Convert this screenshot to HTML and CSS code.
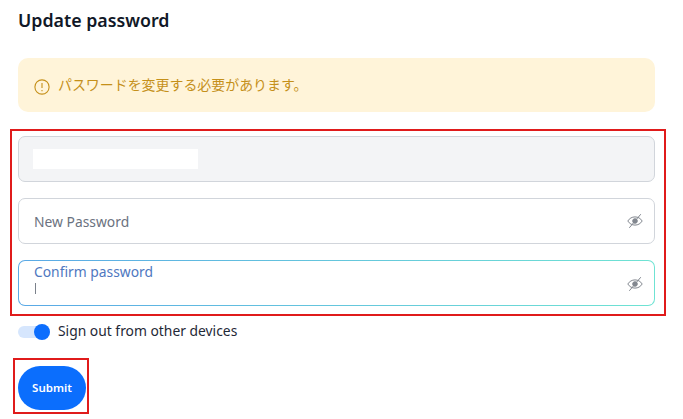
FILE: index.html
```html
<!DOCTYPE html>
<html lang="ja">
<head>
<meta charset="utf-8">
<title>Update password</title>
<link rel="stylesheet" href="styles.css">
</head>
<body>
<main class="page">
  <h1 class="title">Update password</h1>
  <div class="alert">
    <svg class="alert-icon" viewBox="0 0 16 16" width="16" height="16" fill="none" stroke="#c5901a" stroke-width="1.100">
      <circle cx="8" cy="8" r="7.100"/>
      <path d="M8 4v5M8 11v1.200"/>
    </svg>
    <span class="alert-text">パスワードを変更する必要があります。</span>
  </div>
  <form class="form">
    <div class="field field-disabled"><span class="redacted"></span></div>
    <div class="field">
      <span class="placeholder">New Password</span>
      <svg class="eye" viewBox="0 0 16 16" width="16" height="16" fill="none" stroke="#82878f" stroke-width="1">
        <path d="M.8 8C2.500 5.300 5 3.900 8 3.900s5.500 1.400 7.200 4.100c-1.700 2.700-4.200 4.100-7.200 4.100S2.500 10.700.8 8z"/>
        <circle cx="8" cy="8" r="2.300" fill="#82878f"/>
        <path d="M2.300 14.800 13.800 1.200"/>
      </svg>
    </div>
    <div class="field-focus">
      <div class="field-inner">
        <div class="focus-text">
          <span class="label">Confirm password</span>
          <span class="caret"></span>
        </div>
        <svg class="eye" viewBox="0 0 16 16" width="16" height="16" fill="none" stroke="#82878f" stroke-width="1">
          <path d="M.8 8C2.500 5.300 5 3.900 8 3.900s5.500 1.400 7.200 4.100c-1.700 2.700-4.200 4.100-7.200 4.100S2.500 10.700.8 8z"/>
          <circle cx="8" cy="8" r="2.300" fill="#82878f"/>
          <path d="M2.300 14.800 13.800 1.200"/>
        </svg>
      </div>
    </div>
    <div class="toggle-row">
      <span class="toggle"><span class="knob"></span></span>
      <span class="toggle-label">Sign out from other devices</span>
    </div>
    <button class="submit" type="button">Submit</button>
  </form>
  <div class="mark mark-fields"></div>
  <div class="mark mark-submit"></div>
</main>
</body>
</html>
```
FILE: styles.css
```css
* { box-sizing: border-box; }
html, body { margin: 0; padding: 0; background: #fff; }
body { font-family: "Noto Sans", "Noto Sans CJK JP", sans-serif; overflow: hidden; }
.page { position: relative; width: 683px; height: 419px; padding: 9px 28px 0 18px; }
.title { margin: 0; font-size: 17.800px; line-height: 23px; font-weight: 600; color: #111827; }
.alert {
  margin-top: 26px; height: 54px; padding: 0 15px; border-radius: 10px;
  background: #fff4d9; color: #c5901a; display: flex; align-items: center; gap: 8px;
  font-size: 14px;
}
.alert-icon { flex: none; margin: 3px 0 0 1px; }
.alert-text { padding-bottom: 2px; font-size: 13.950px; }
.form { margin-top: 24px; display: flex; flex-direction: column; }
.field {
  height: 46px; border: 1px solid #d1d5db; border-radius: 7px; padding: 0 11px 0 15px;
  display: flex; align-items: center; justify-content: space-between; margin-bottom: 16px;
}
.field-disabled { background: #f3f4f6; }
.redacted { width: 165px; height: 20px; margin-left: -1px; background: #fff; }
.placeholder { font-size: 13.850px; color: #6b7280; }
.field-focus {
  height: 46px; padding: 1px; border-radius: 7px;
  background: linear-gradient(90deg, #5aa9e6, #6fe3d3);
}
.field-inner {
  height: 44px; border-radius: 6px; background: #fff; padding: 2px 11px 0 15px;
  display: flex; align-items: center; justify-content: space-between;
}
.focus-text { display: flex; flex-direction: column; align-self: flex-start; }
.label { font-size: 13.850px; line-height: 17px; color: #4f78bf; }
.caret { width: 1px; height: 11px; margin: 3px 0 0 1px; background: #7b818b; }
.toggle-row { display: flex; align-items: center; gap: 8px; margin-top: 18px; height: 16px; }
.toggle { position: relative; width: 32px; height: 12px; border-radius: 6px; background: #d6e6fd; }
.knob { position: absolute; right: 0; top: -2px; width: 16px; height: 16px; border-radius: 50%; background: #0d6efd; }
.toggle-label { font-size: 13.850px; line-height: 16px; padding-bottom: 2px; color: #1f2937; }
.submit {
  width: 68px; height: 44px; margin-top: 26px; border: 0; border-radius: 22px; padding: 0 0 2px;
  background: #0b6efd; color: #fff; font: 600 11.500px "Noto Sans", sans-serif;
}
.mark { position: absolute; border: 2px solid #e01b1b; }
.mark-fields { left: 10px; top: 129px; width: 656px; height: 187px; }
.mark-submit { left: 13px; top: 358px; width: 76px; height: 56px; }
```
